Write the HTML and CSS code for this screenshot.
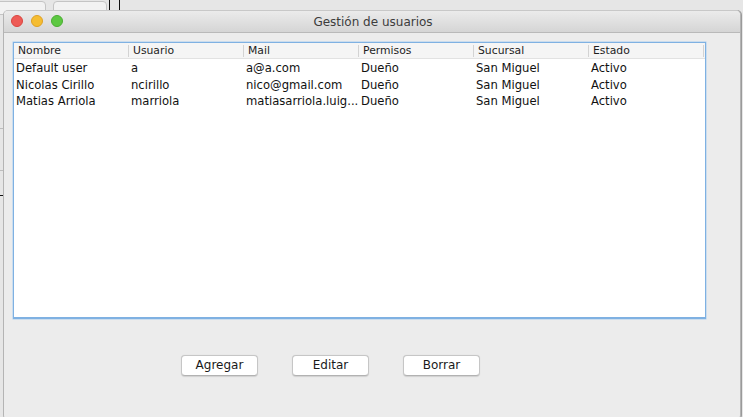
FILE: index.html
```html
<!DOCTYPE html>
<html lang="es">
<head>
<meta charset="utf-8">
<title>Gestión de usuarios</title>
<link rel="stylesheet" href="styles.css">
</head>
<body>
<div class="desktop">
  <div class="bg-btn bg-btn-1"></div>
  <div class="bg-btn bg-btn-2"></div>
  <div class="bg-line bg-line-1"></div>
  <div class="bg-line bg-line-2"></div>
  <div class="bg-hline bg-hline-1"></div>
  <div class="bg-hline bg-hline-2"></div>
  <div class="bg-hline bg-hline-3"></div>

  <div class="window">
    <div class="titlebar">
      <div class="lights">
        <span class="light red"></span>
        <span class="light yellow"></span>
        <span class="light green"></span>
      </div>
      <div class="title">Gestión de usuarios</div>
    </div>
    <div class="content">
      <div class="table">
        <div class="row head">
          <div class="cell">Nombre</div>
          <div class="cell">Usuario</div>
          <div class="cell">Mail</div>
          <div class="cell">Permisos</div>
          <div class="cell">Sucursal</div>
          <div class="cell">Estado</div>
        </div>
        <div class="body">
          <div class="row">
            <div class="cell">Default user</div>
            <div class="cell">a</div>
            <div class="cell">a@a.com</div>
            <div class="cell">Dueño</div>
            <div class="cell">San Miguel</div>
            <div class="cell">Activo</div>
          </div>
          <div class="row">
            <div class="cell">Nicolas Cirillo</div>
            <div class="cell">ncirillo</div>
            <div class="cell">nico@gmail.com</div>
            <div class="cell">Dueño</div>
            <div class="cell">San Miguel</div>
            <div class="cell">Activo</div>
          </div>
          <div class="row">
            <div class="cell">Matias Arriola</div>
            <div class="cell">marriola</div>
            <div class="cell">matiasarriola.luig...</div>
            <div class="cell">Dueño</div>
            <div class="cell">San Miguel</div>
            <div class="cell">Activo</div>
          </div>
        </div>
      </div>
      <div class="buttons">
        <button class="btn">Agregar</button>
        <button class="btn">Editar</button>
        <button class="btn">Borrar</button>
      </div>
    </div>
  </div>
</div>
</body>
</html>
```

FILE: styles.css
```css
* { box-sizing: border-box; }

html, body {
  margin: 0;
  padding: 0;
  width: 743px;
  height: 417px;
  overflow: hidden;
  background: #e6e6e6;
  font-family: "DejaVu Sans", "Liberation Sans", sans-serif;
  color: #1a1a1a;
}

.desktop {
  position: relative;
  width: 743px;
  height: 417px;
  padding: 10px 0 0 3px;
}

.bg-btn {
  position: absolute;
  top: 1px;
  height: 14px;
  background: #f2f2f2;
  border: 1px solid #c4c4c4;
  border-radius: 4px;
}
.bg-btn-1 { left: -4px; width: 50px; }
.bg-btn-2 { left: 53px; width: 54px; }

.bg-line {
  position: absolute;
  top: 0;
  width: 1px;
  height: 10px;
  background: #111;
}
.bg-line-1 { left: 109px; }
.bg-line-2 { left: 119px; }

.bg-hline {
  position: absolute;
  left: 0;
  width: 3px;
  height: 1px;
}
.bg-hline-1 { top: 128px; background: #bdbdbd; }
.bg-hline-2 { top: 170px; background: #bdbdbd; }
.bg-hline-3 { top: 195px; background: #111; }

.window {
  position: relative;
  width: 738px;
  height: 410px;
  background: #ececec;
  border: 1px solid #b4b4b4;
  border-top-color: #c8c8c8;
  border-radius: 5px;
  overflow: hidden;
  box-shadow: 1px 0 0 #9a9a9a;
}

.titlebar {
  position: relative;
  height: 22px;
  background: linear-gradient(#ebebeb, #d5d5d5);
  border-bottom: 1px solid #b9b9b9;
  display: flex;
  align-items: center;
  justify-content: center;
}

.lights {
  position: absolute;
  left: 7px;
  top: 4px;
  display: flex;
  gap: 8px;
}

.light {
  width: 12px;
  height: 12px;
  border-radius: 50%;
}
.red { background: #ee5b56; border: 1px solid #d9453f; }
.yellow { background: #f5bd32; border: 1px solid #dea024; }
.green { background: #5dc842; border: 1px solid #4aad32; }

.title {
  font-size: 12px;
  color: #3c3c3c;
  padding-left: 2px;
}

.content {
  padding: 9px 0 0 9px;
}

.table {
  width: 693px;
  height: 277px;
  background: #ffffff;
  border: 1px solid #7fb1e2;
  border-bottom: 2px solid #7fb1e2;
  box-shadow: 0 0 0 0.5px #a9cdf0;
}

.body {
  padding-top: 1px;
}

.row {
  display: grid;
  grid-template-columns: repeat(6, 115px);
  height: 16px;
  align-items: center;
  font-size: 11.6px;
  line-height: 16px;
  color: #111;
}

.body .row:first-child { margin-bottom: 1px; }

.row .cell {
  padding-left: 2px;
  white-space: nowrap;
  overflow: hidden;
}

.row.head {
  height: 16px;
  background: #f5f5f5;
  border-bottom: 1px solid #e2e2e2;
  font-size: 10.8px;
  color: #1e1e1e;
}

.row.head .cell {
  border-right: 1px solid #d3d3d3;
  line-height: 12px;
  padding-left: 4px;
}

.buttons {
  display: flex;
  gap: 34px;
  padding: 36px 0 0 168px;
}

.btn {
  width: 77px;
  height: 21px;
  padding: 0;
  font-family: "DejaVu Sans", "Liberation Sans", sans-serif;
  font-size: 12px;
  color: #1a1a1a;
  background: #ffffff;
  border: 1px solid #c6c6c6;
  border-bottom-color: #b2b2b2;
  border-radius: 4px;
  box-shadow: 0 0.5px 1px rgba(0,0,0,0.12);
  line-height: 19px;
}
```
